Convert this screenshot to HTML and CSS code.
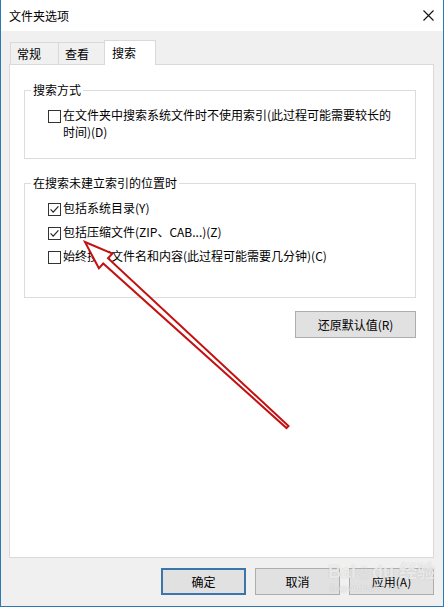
FILE: index.html
```html
<!DOCTYPE html>
<html lang="zh-CN">
<head>
<meta charset="utf-8">
<title>文件夹选项</title>
<link rel="stylesheet" href="styles.css">
</head>
<body>
<div class="window">
  <div class="titlebar">
    <span class="title">文件夹选项</span>
    <svg class="close" width="11" height="11" viewBox="0 0 11 11"><path d="M0.5 0.5 L10.5 10.5 M10.5 0.5 L0.5 10.5" stroke="#111" stroke-width="1.1" fill="none"/></svg>
  </div>
  <div class="content">
    <div class="tabs">
      <div class="tab tab-first">常规</div>
      <div class="tab tab-second">查看</div>
      <div class="tab tab-active">搜索</div>
    </div>
    <div class="panel">
      <fieldset class="group">
        <legend>搜索方式</legend>
        <div class="group-body group-body-1">
          <div class="row">
            <svg class="cb" width="13" height="13" viewBox="0 0 13 13"><rect x="0.5" y="0.5" width="12" height="12" fill="#fff" stroke="#333"/></svg>
            <span class="label label-wrap">在文件夹中搜索系统文件时不使用索引(此过程可能需要较长的时间)(D)</span>
          </div>
        </div>
      </fieldset>
      <fieldset class="group group-2">
        <legend>在搜索未建立索引的位置时</legend>
        <div class="group-body group-body-2">
          <div class="row">
            <svg class="cb" width="13" height="13" viewBox="0 0 13 13"><rect x="0.5" y="0.5" width="12" height="12" fill="#fff" stroke="#333"/><path d="M2.6 6.4 L5.2 9.1 L10.4 3.4" stroke="#222" stroke-width="1.2" fill="none"/></svg>
            <span class="label">包括系统目录(Y)</span>
          </div>
          <div class="row">
            <svg class="cb" width="13" height="13" viewBox="0 0 13 13"><rect x="0.5" y="0.5" width="12" height="12" fill="#fff" stroke="#333"/><path d="M2.6 6.4 L5.2 9.1 L10.4 3.4" stroke="#222" stroke-width="1.2" fill="none"/></svg>
            <span class="label">包括压缩文件(ZIP、CAB...)(Z)</span>
          </div>
          <div class="row">
            <svg class="cb" width="13" height="13" viewBox="0 0 13 13"><rect x="0.5" y="0.5" width="12" height="12" fill="#fff" stroke="#333"/></svg>
            <span class="label">始终搜索文件名和内容(此过程可能需要几分钟)(C)</span>
          </div>
        </div>
      </fieldset>
      <button class="btn btn-reset">还原默认值(R)</button>
    </div>
    <div class="buttons">
      <button class="btn btn-dlg btn-default">确定</button>
      <button class="btn btn-dlg">取消</button>
      <button class="btn btn-dlg">应用(A)</button>
    </div>
  </div>
  <div class="watermark">
    <span class="wm-main">Bai<span class="paw">❀</span>du 经验</span>
    <span class="wm-sub">jingyan.baidu.com</span>
  </div>
  <svg class="arrow" width="444" height="607" viewBox="0 0 444 607">
    <polygon points="85,242 112.4,253.5 108,258.3 288.5,426 286.5,428 103.2,263.5 98.9,268.3" fill="#fff" stroke="#c41212" stroke-width="2" stroke-linejoin="miter"/>
  </svg>
</div>
</body>
</html>
```

FILE: styles.css
```css
html, body {
  margin: 0;
  padding: 0;
  background: #f0f0f0;
}

body {
  font-family: "Microsoft YaHei", "Noto Sans CJK SC", sans-serif;
  font-size: 12px;
  color: #000;
}

.window {
  position: relative;
  width: 444px;
  height: 607px;
  box-sizing: border-box;
  border: 1px solid #2b79b5;
  border-top: none;
  display: flex;
  flex-direction: column;
  background: #f0f0f0;
  overflow: hidden;
}

.titlebar {
  flex: none;
  height: 31px;
  background: #fff;
  display: flex;
  align-items: center;
  justify-content: space-between;
  padding: 0 9px 0 8px;
  line-height: 16px;
}

.title {
  font-size: 12px;
}

.close {
  display: block;
}

.content {
  flex: 1;
  display: flex;
  flex-direction: column;
  padding: 9px 9px 11px 8px;
  min-height: 0;
}

.tabs {
  flex: none;
  height: 24px;
  display: flex;
  align-items: flex-end;
  padding-left: 1px;
}

.tab {
  box-sizing: border-box;
  height: 22px;
  border: 1px solid #d9d9d9;
  border-bottom: none;
  background: #f0f0f0;
  display: flex;
  align-items: center;
  padding: 0 6px;
  line-height: 16px;
}

.tab-first {
  width: 49px;
}

.tab-second {
  width: 46px;
  border-left: none;
}

.tab-active {
  position: relative;
  z-index: 1;
  width: 52px;
  height: 25px;
  margin-left: -1px;
  margin-bottom: -1px;
  background: #fff;
  padding: 0 7px;
  padding-bottom: 1px;
}

.panel {
  flex: 1;
  background: #fff;
  border: 1px solid #d9d9d9;
  padding: 17px 17px 0 14px;
  display: flex;
  flex-direction: column;
  min-height: 0;
}

.group {
  margin: 0;
  padding: 0;
  border: 1px solid #dcdcdc;
  min-width: 0;
}

.group legend {
  margin-left: 6px;
  padding: 0 2px;
  line-height: 16px;
}

.group-2 {
  margin-top: 16px;
}

.group-body {
  padding: 8px 0 18px 23px;
  display: flex;
  flex-direction: column;
  gap: 7px;
}

.group-body-2 {
  padding-bottom: 33px;
}

.row {
  display: flex;
  align-items: flex-start;
  gap: 2px;
  line-height: 17px;
}

.cb {
  flex: none;
  margin-top: 4px;
  display: block;
}

.label-wrap {
  max-width: 336px;
}

.btn {
  font-family: "Microsoft YaHei", "Noto Sans CJK SC", sans-serif;
  font-size: 12px;
  color: #000;
  background: #e1e1e1;
  border: 1px solid #adadad;
  box-sizing: border-box;
  height: 27px;
  padding: 0;
  line-height: 16px;
}

.btn-reset {
  align-self: flex-end;
  width: 121px;
  margin-top: 13px;
}

.buttons {
  flex: none;
  display: flex;
  justify-content: flex-end;
  gap: 9px;
  margin-top: 10px;
}

.btn-dlg {
  width: 85px;
}

.btn-default {
  border: 2px solid #3a76aa;
}

.watermark {
  position: absolute;
  left: 327px;
  top: 562px;
  display: flex;
  flex-direction: column;
  align-items: flex-start;
  white-space: nowrap;
  pointer-events: none;
  color: rgba(255, 255, 255, 0.7);
  text-shadow: 0 0 1px rgba(140, 140, 140, 0.5);
  font-family: "Liberation Sans", "Noto Sans CJK SC", sans-serif;
}

.wm-main {
  font-size: 18px;
  font-weight: bold;
  line-height: 20px;
}

.paw {
  font-size: 14px;
  margin: 0 1px;
}

.wm-sub {
  font-size: 9px;
  line-height: 10px;
  margin-left: 2px;
}

.arrow {
  position: absolute;
  left: -1px;
  top: 0;
  pointer-events: none;
}
```
